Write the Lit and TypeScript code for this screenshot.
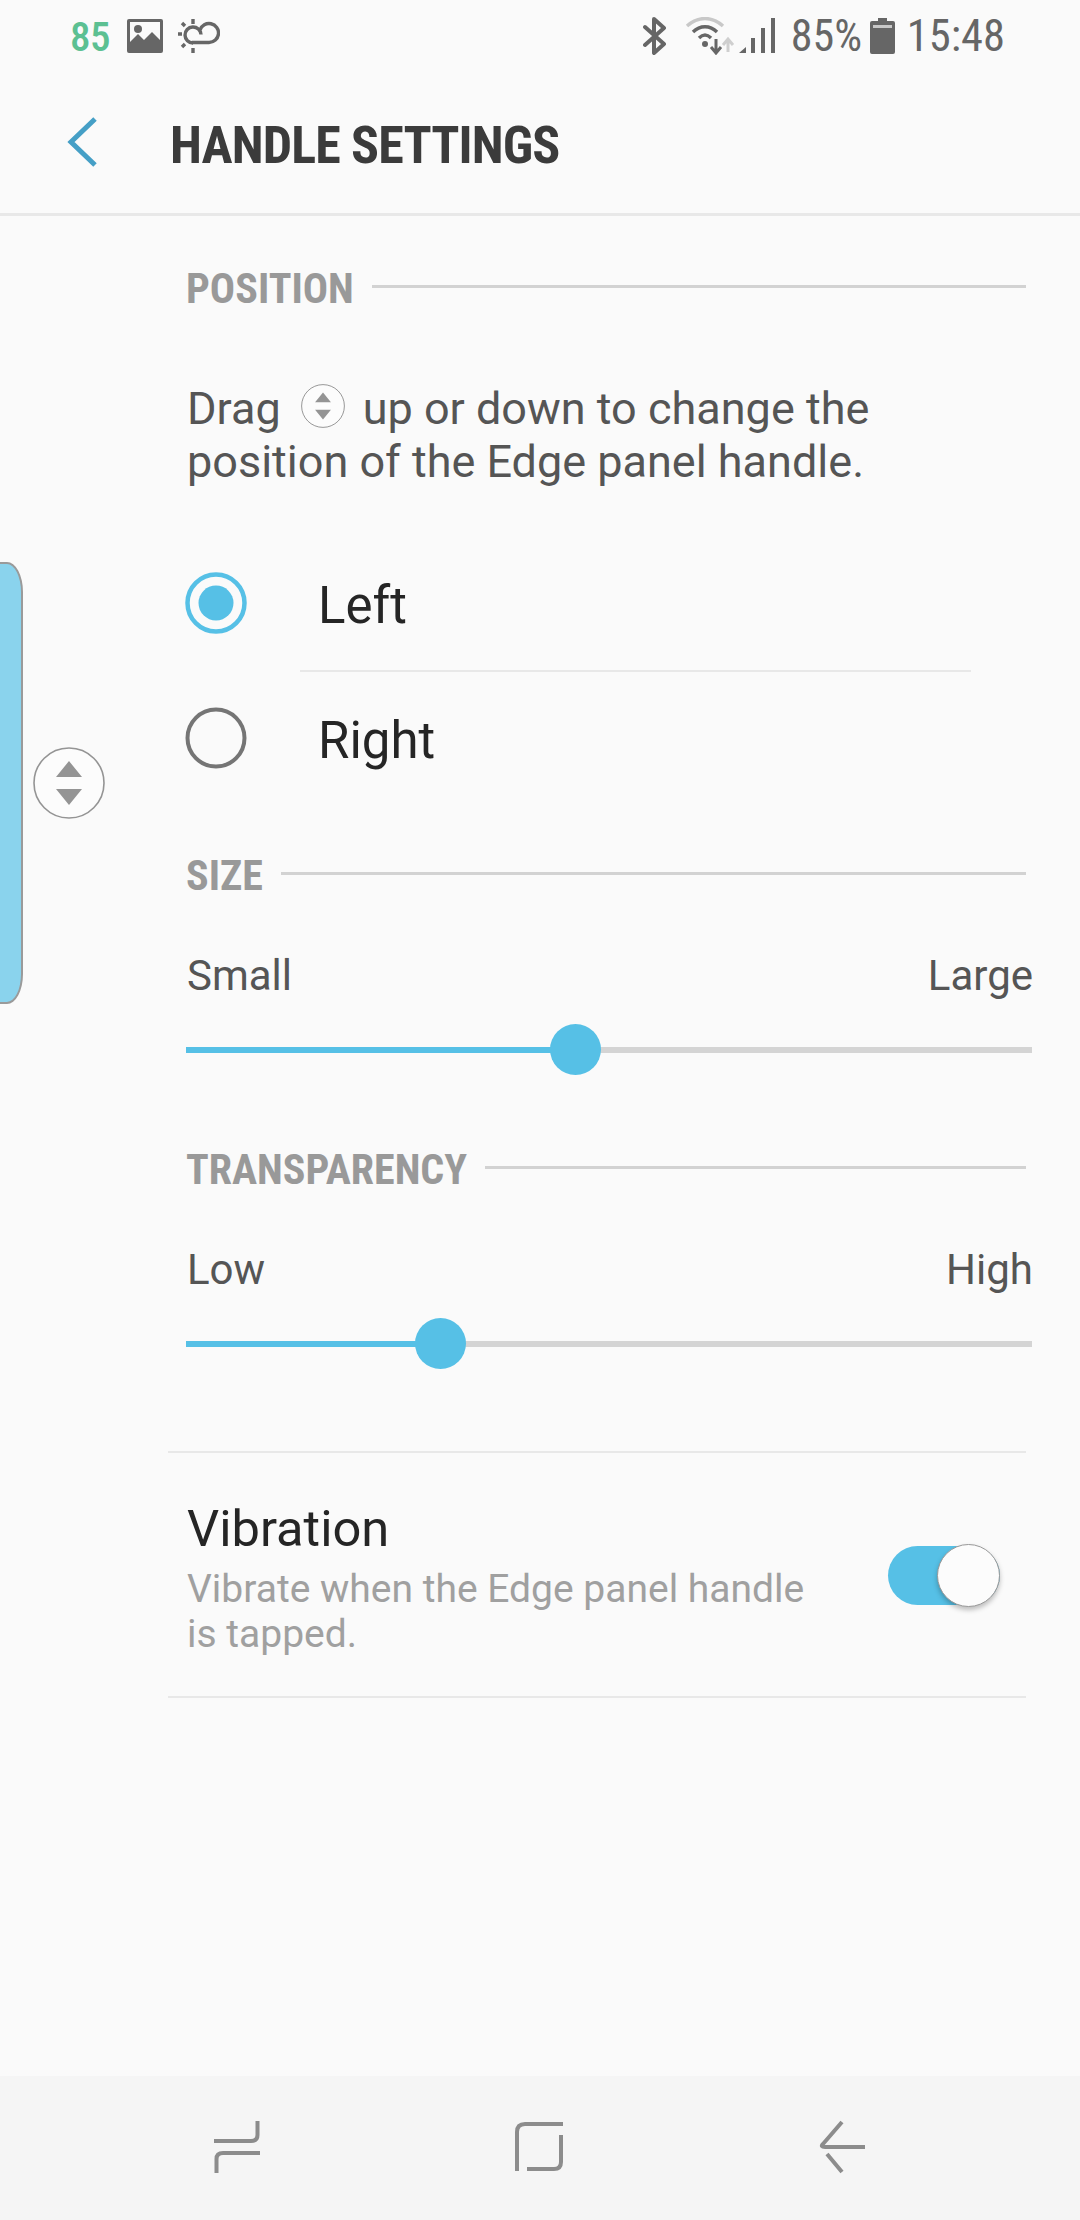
import { LitElement, html, css } from "lit";
import { customElement } from "lit/decorators.js";

const updown = (size: number) => html`<svg class="ud" width=${size} height=${size} viewBox="0 0 72 72">
  <circle cx="36" cy="36" r="35" fill="#fcfcfc" stroke="#949494" stroke-width="1.6"/>
  <path d="M36 14 L49 30 H23 Z M36 58 L49 42 H23 Z" fill="#949494"/>
</svg>`;

@customElement("app-root")
export class AppRoot extends LitElement {
  static styles = css`
    :host { display: block; position: relative; width: 1080px; height: 2220px; overflow: hidden; background: #fafafa; font-family: Roboto, sans-serif; color: #555; }
    * { box-sizing: border-box; }
    .page { display: flex; flex-direction: column; height: 2220px; }
    .status { height: 72px; flex: none; display: flex; align-items: center; padding: 0 0 0 70px; color: #666; font-size: 41px; position: relative; }
    .cond { font-stretch: 75%; display: inline-block; }
    .st-left { display: flex; align-items: center; }
    .green { color: #5cc092; width: 56px; font-weight: 500; letter-spacing: -0.5px; padding-top: 2px; }
    .st-right { margin-left: auto; display: flex; align-items: center; padding-right: 75px; }
    .pct { font-size: 44px; width: 79px; }
    .time { font-size: 44.5px; margin-left: 12px; }
    svg { display: block; flex: none; }
    .bar { height: 144px; flex: none; display: flex; align-items: center; padding-left: 66px; border-bottom: 3px solid #e8e8e8; padding-bottom: 1px; }
    .title { font-size: 52px; font-weight: 700; color: #3b3b3b; margin-left: 72px; white-space: nowrap; letter-spacing: -0.85px; padding-top: 7px; }
    .content { flex: 1; padding-left: 187px; display: flex; flex-direction: column; }
    .sec { display: flex; align-items: center; padding-right: 54px; height: 40px; }
    .sec span { font-size: 42px; font-weight: 700; color: #999; margin-right: 18px; white-space: nowrap; padding-top: 4px; margin-left: -1px; }
    .sec i { flex: 1; height: 3px; background: #d2d2d2; }
    .desc { margin-top: 76px; font-size: 45px; line-height: 53px; color: #555; width: 800px; height: 106px; }
    .line1 { display: flex; align-items: center; height: 53px; white-space: pre; }
    .line1 .ud { margin: 0 18px 6px 20px; }
    .radio { display: flex; align-items: center; height: 134px; margin-left: -2px; font-size: 51px; color: #252525; }
    .radio label { margin-left: 71px; padding-top: 5px; }
    .rad-sep { height: 2px; background: #e8e8e8; margin: 0 109px 0 113px; }
    .radios { margin-top: 48px; }
    .lab { display: flex; justify-content: space-between; font-size: 42px; line-height: 50px; color: #555; padding: 2px 47px 0 0; }
    .slider { position: relative; height: 51px; margin-right: 48px; margin-left: -1px; display: flex; align-items: center; margin-top: 23px; }
    .track { flex: 1; height: 6px; background: #d4d4d4; display: block; }
    .fill { height: 6px; background: #56c0e6; display: block; }
    .thumb { position: absolute; top: 0; width: 51px; height: 51px; border-radius: 50%; background: #56c0e6; }
    .list { margin-left: -19px; margin-right: 54px; }
    .vib { border-top: 2px solid #e8e8e8; border-bottom: 2px solid #e8e8e8; height: 247px; padding: 46px 0 0 19px; display: flex; position: relative; }
    .vib h3 { margin: 0; font-weight: 400; font-size: 50.6px; line-height: 60px; color: #252525; }
    .vib p { margin: 8px 0 0; font-size: 39px; line-height: 45px; color: #a0a0a0; width: 640px; }
    .toggle { position: absolute; left: 720px; top: 93px; width: 112px; height: 59px; border-radius: 30px; background: #56c0e6; }
    .knob { position: absolute; left: 49px; top: -2px; width: 63px; height: 63px; border-radius: 50%; background: #fcfcfc; border: 1.5px solid #999; box-shadow: 0 3px 5px rgba(0,0,0,.25); }
    .nav { height: 144px; flex: none; background: #f5f5f5; position: relative; display: flex; padding-left: 214px; }
    .handle { position: absolute; left: -30px; top: 562px; width: 53px; height: 442px; background: #8ad3ed; border: 2px solid #9a9a9a; border-radius: 0 16px 16px 0 / 0 30px 30px 0; }
    .float { position: absolute; left: 33px; top: 747px; }
  `;

  render() {
    return html`
      <div class="page">
        <div class="status">
          <div class="st-left">
            <span class="cond green">85</span>
            <svg width="36" height="34" viewBox="0 0 36 34" style="margin-left:1px">
              <path fill-rule="evenodd" d="M2 0H34a2 2 0 0 1 2 2V32a2 2 0 0 1-2 2H2a2 2 0 0 1-2-2V2a2 2 0 0 1 2-2Z M3 3V23L11 15L17 21L25 13L33 21V3Z" fill="#666"/>
              <circle cx="11" cy="10" r="4" fill="#666"/>
            </svg>
            <svg width="42" height="34" viewBox="0 0 42 34" style="margin-left:15px" fill="none" stroke="#666" stroke-width="3.4">
              <path d="M14 23.5H31A9.5 9.5 0 1 0 22 11"/>
              <path d="M15 24 A8 8 0 1 1 23 15.5"/>
              <path d="M15 0V5M15 29V34M0 15H4M4 4L7 7M4 28L7 25"/>
            </svg>
          </div>
          <div class="st-right">
            <svg width="24" height="38" viewBox="0 0 24 38" fill="none" stroke="#666" stroke-width="4" stroke-linejoin="round" stroke-linecap="round">
              <path d="M2 10L21 27L11 36V2L21 11L2 28"/>
            </svg>
            <svg width="50" height="38" viewBox="0 0 50 38" style="margin-left:18px" fill="none">
              <path d="M2 9C13 -1 27 -1 38 9" stroke="#c8c8c8" stroke-width="3.4"/>
              <path d="M8 15C15 8 25 8 32 15M14 21C18 17 22 17 26 21" stroke="#666" stroke-width="3.4"/>
              <circle cx="20" cy="27" r="3" fill="#666"/>
              <path d="M31 22V35M26 30L31 36L36 30" stroke="#666" stroke-width="3"/>
              <path d="M43 35V23M38 28L43 22L48 28" stroke="#cfcfcf" stroke-width="3"/>
            </svg>
            <svg width="38" height="38" viewBox="0 0 38 38" style="margin-left:3px" fill="#666">
              <path d="M1 36L8 30V36Z"/><rect x="13" y="21" width="4" height="15"/><rect x="23" y="11" width="4" height="25"/><rect x="33" y="1" width="4" height="35"/>
            </svg>
            <span class="cond pct" style="margin-left:15px">85%</span>
            <svg width="25" height="36" viewBox="0 0 25 36">
              <path d="M8 0H17V3H23a2 2 0 0 1 2 2V34a2 2 0 0 1-2 2H2a2 2 0 0 1-2-2V5a2 2 0 0 1 2-2H8Z" fill="#666"/>
              <rect x="3" y="7" width="19" height="3" fill="#c8c8c8"/>
            </svg>
            <span class="cond time">15:48</span>
          </div>
        </div>
        <div class="bar">
          <svg width="32" height="50" viewBox="0 0 32 50" fill="none" stroke="#459fc6" stroke-width="5"><path d="M29 2L5 25L29 48"/></svg>
          <span class="title cond">HANDLE SETTINGS</span>
        </div>
        <div class="content">
          <div class="sec" style="margin-top:50px"><span class="cond">POSITION</span><i></i></div>
          <div class="desc">
            <div class="line1">Drag${updown(44)}up or down to change the</div>
            <div>position of the Edge panel handle.</div>
          </div>
          <div class="radios">
            <div class="radio">
              <svg width="62" height="62" viewBox="0 0 62 62"><circle cx="31" cy="31" r="28.5" fill="none" stroke="#56c0e6" stroke-width="4.5"/><circle cx="31" cy="31" r="17.5" fill="#56c0e6"/></svg>
              <label>Left</label>
            </div>
            <div class="rad-sep"></div>
            <div class="radio" style="height:132px">
              <svg width="62" height="62" viewBox="0 0 62 62"><circle cx="31" cy="31" r="28.5" fill="none" stroke="#757575" stroke-width="4"/></svg>
              <label>Right</label>
            </div>
          </div>
          <div class="sec" style="margin-top:49px"><span class="cond">SIZE</span><i></i></div>
          <div class="lab" style="margin-top:56px"><span>Small</span><span>Large</span></div>
          <div class="slider">
            <i class="fill" style="width:389px"></i><i class="track"></i>
            <i class="thumb" style="left:364px"></i>
          </div>
          <div class="sec" style="margin-top:72px"><span class="cond">TRANSPARENCY</span><i></i></div>
          <div class="lab" style="margin-top:56px"><span>Low</span><span>High</span></div>
          <div class="slider">
            <i class="fill" style="width:254px"></i><i class="track"></i>
            <i class="thumb" style="left:229px"></i>
          </div>
          <div class="list" style="margin-top:82px">
            <div class="vib">
              <div>
                <h3>Vibration</h3>
                <p>Vibrate when the Edge panel handle is tapped.</p>
              </div>
              <div class="toggle"><div class="knob"></div></div>
            </div>
          </div>
        </div>
        <div class="nav">
          <svg width="50" height="144" viewBox="214 2076 50 144" fill="none" stroke="#8c8c8c" stroke-width="4">
            <path d="M214 2141H251Q257.5 2141 257.5 2135V2121M260 2153H223Q216.5 2153 216.5 2159V2173"/>
          </svg>
          <svg width="50" height="144" viewBox="515 2076 50 144" style="margin-left:251px" fill="none" stroke="#8c8c8c" stroke-width="4">
            <path d="M563 2124H525Q517 2124 517 2132V2171M561 2135V2162Q561 2169 554 2169H527"/>
          </svg>
          <svg width="50" height="144" viewBox="818 2076 50 144" style="margin-left:253px" fill="none" stroke="#8c8c8c" stroke-width="4">
            <path d="M842 2122L823 2144Q820 2147 825 2147H865M827 2154L842 2172"/>
          </svg>
        </div>
      </div>
      <div class="handle"></div>
      <div class="float">${updown(72)}</div>
    `;
  }
}
